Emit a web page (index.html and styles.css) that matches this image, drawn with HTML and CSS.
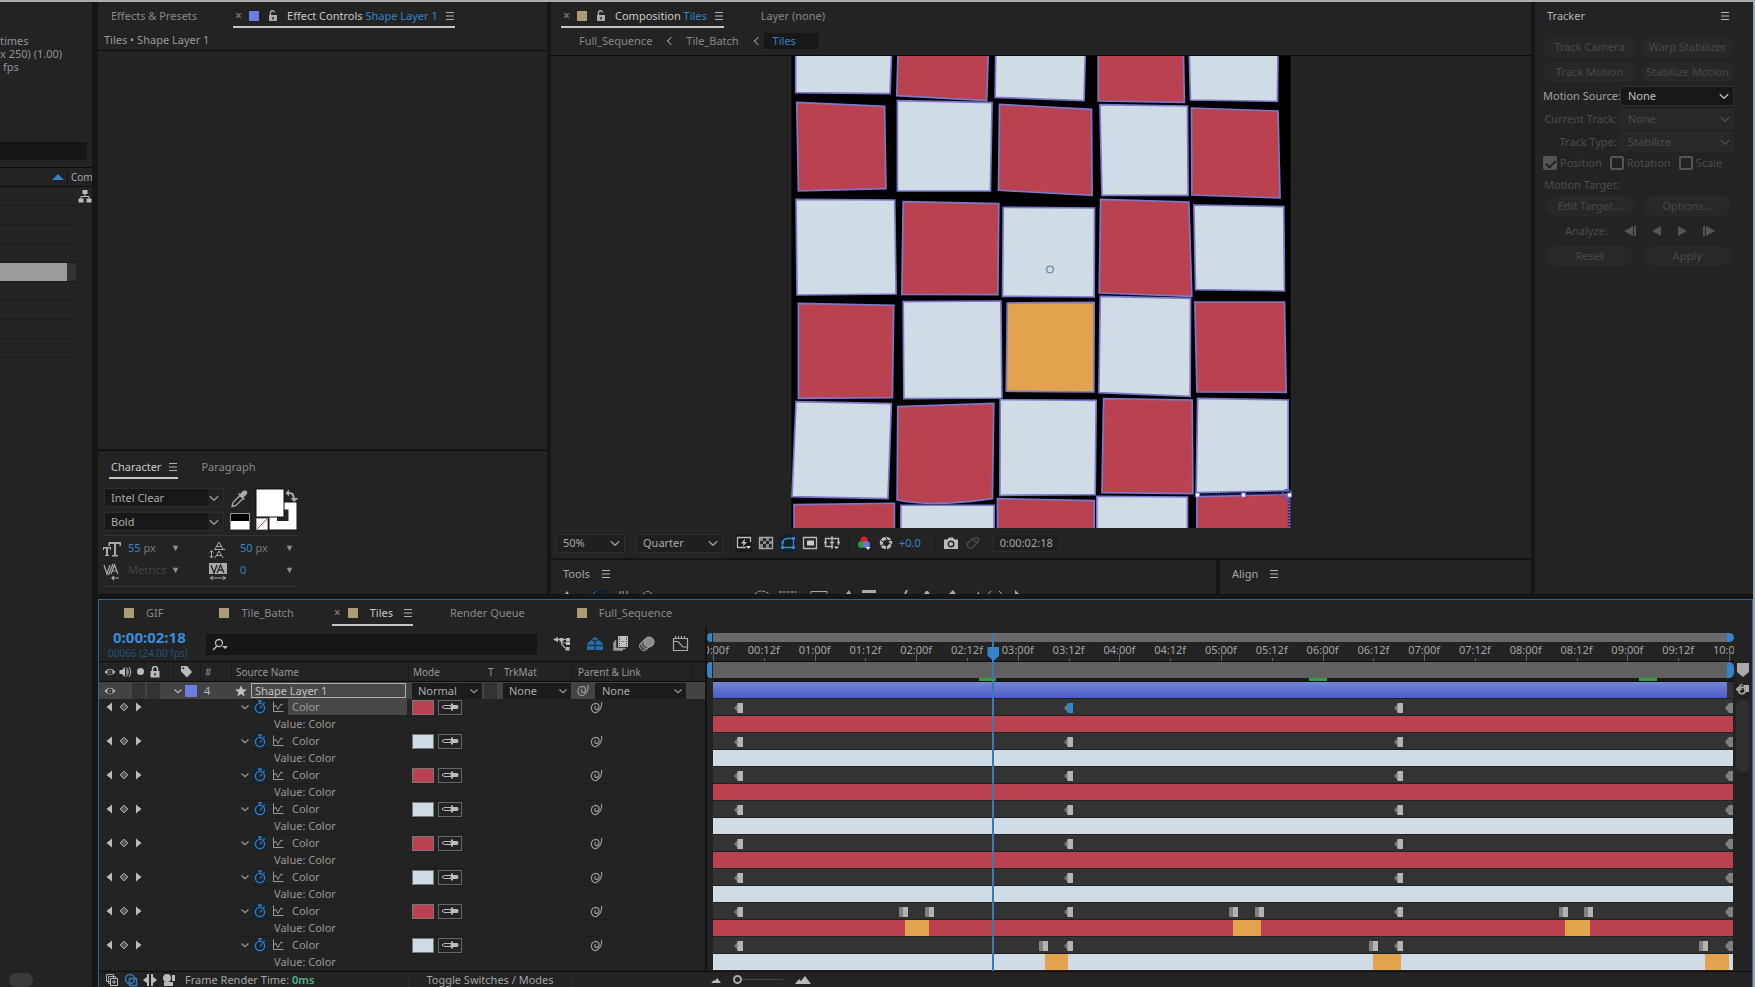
FILE: index.html
```html
<!DOCTYPE html>
<html lang="en">
<head>
<meta charset="utf-8">
<title>Tiles - Motion Editor</title>
<link rel="stylesheet" href="styles.css">
</head>
<body>
<svg class="defs" aria-hidden="true">
  <symbol id="i-menu" viewBox="0 0 10 10"><path d="M1 1.500h8M1 5h8M1 8.500h8" stroke="currentColor" stroke-width="1.200"/></symbol>
  <symbol id="i-lock-open" viewBox="0 0 10 12"><path d="M1 5h8v6H1z" fill="currentColor"/><path d="M2.500 5V3a2 2 0 0 1 4-.6" fill="none" stroke="currentColor" stroke-width="1.400"/><path d="M5 7v2.500" stroke="#232323" stroke-width="1.400"/></symbol>
  <symbol id="i-lock" viewBox="0 0 10 12"><path d="M.5 5h9v6.500h-9z" fill="currentColor"/><path d="M2.500 5V3a2.500 2.500 0 0 1 5 0v2" fill="none" stroke="currentColor" stroke-width="1.500"/><path d="M5 7v2.500" stroke="#232323" stroke-width="1.400"/></symbol>
  <symbol id="i-eye" viewBox="0 0 12 10"><path d="M.5 5Q6-1.500 11.500 5Q6 11.500 .5 5z" fill="currentColor"/><circle cx="6" cy="5" r="2.600" fill="#2c2c2c"/><circle cx="6" cy="5" r="1" fill="#777"/></symbol>
  <symbol id="i-speaker" viewBox="0 0 13 12"><path d="M.5 4H3l3-3v10L3 8H.5z" fill="currentColor"/><path d="M7.500 1.500q3.500 4.500 0 9M7.500 4q1.500 2 0 4M10 1q3.500 5 0 10" fill="none" stroke="currentColor"/></symbol>
  <symbol id="i-tag" viewBox="0 0 13 13"><path d="M1 1h6l5 6-5 5.500-6-6z" fill="currentColor"/><circle cx="3.300" cy="3.300" r="1" fill="#232323"/></symbol>
  <symbol id="i-chev" viewBox="0 0 10 10"><path d="M1.500 3.500L5 6.800l3.500-3.300" fill="none" stroke="currentColor" stroke-width="1.200"/></symbol>
  <symbol id="i-prev" viewBox="0 0 8 10"><path d="M7 .5v9L1.500 5z" fill="currentColor"/></symbol>
  <symbol id="i-next" viewBox="0 0 8 10"><path d="M1 .5v9L6.500 5z" fill="currentColor"/></symbol>
  <symbol id="i-diamond" viewBox="0 0 10 10"><path d="M5 1.200L8.800 5 5 8.800 1.200 5z" fill="#555" stroke="currentColor"/></symbol>
  <symbol id="i-watch" viewBox="0 0 12 14"><circle cx="6" cy="8" r="4.600" fill="none" stroke="currentColor" stroke-width="1.400"/><path d="M6 3.500V1M4 1h4M9.500 3.500l1.200-1.200M6 8.500l2-3" stroke="currentColor" stroke-width="1.300"/></symbol>
  <symbol id="i-graph" viewBox="0 0 12 12"><path d="M1.500 .5v10H11.500M1.500 6.500l2-2.500 2.500 4.500 3-5.500 2 1" fill="none" stroke="currentColor"/></symbol>
  <symbol id="i-spiral" viewBox="0 0 13 13"><path d="M11.500 1A9.500 9.500 0 0 1 6 11.700A4.700 4.700 0 0 1 1.300 7A4.700 4.700 0 0 1 6 2.300A3.300 3.300 0 0 1 9 5.700A2.800 2.800 0 0 1 6.200 8.600A1.900 1.900 0 0 1 5.600 5.200" fill="none" stroke="currentColor" stroke-width="1.200"/></symbol>
  <symbol id="i-pick" viewBox="0 0 20 10"><path d="M2 5q1-1.500 3-1.500h6v3H5Q3 6.500 2 5z" fill="none" stroke="currentColor"/><path d="M11 1.500h2V3h4q1.500 0 1.500 2T17 7h-4v1.500h-2z" fill="currentColor"/></symbol>
  <symbol id="i-star" viewBox="0 0 12 12"><path d="M6 .3l1.700 3.900 4.200.3-3.300 2.700 1.100 4.200L6 9.100l-3.700 2.300 1.100-4.200L.1 4.500l4.200-.3z" fill="currentColor"/></symbol>
  <symbol id="i-key" viewBox="0 0 10 10"><path d="M4.500 0v10L0 5z" fill="#777"/><path d="M3.500 0H9v10H3.500z" fill="currentColor"/></symbol>
  <symbol id="i-hold" viewBox="0 0 10 10"><path d="M0 0h4v10H0z" fill="#808080"/><path d="M4 0h5v10H4z" fill="currentColor"/></symbol>
  <symbol id="i-end" viewBox="0 0 10 10"><path d="M1 5l4-5h4v10H5z" fill="#808080"/></symbol>
</svg>
<div class="app">
  <aside class="project">
    <div class="info"><span>times</span><span>x 250) (1.00)</span><span class="fps">fps</span></div>
    <input class="find" type="text" aria-label="Search project">
    <div class="cols"><svg width="12" height="6"><path d="M0 6L6 0l6 6z" fill="#2f84d0"/></svg><span>Com</span></div>
    <div class="list">
      <svg class="tree" width="14" height="13" viewBox="0 0 14 13"><path d="M4.500 0h5v4h-5zM.5 8.500h5v4h-5zM8.500 8.500h5v4h-5z" fill="#bbb"/><path d="M7 4v2.500M3 9V6.500h8V9" fill="none" stroke="#bbb"/></svg>
      <i></i><i></i><i></i><i></i><i class="on"></i><i></i><i></i><i></i><i></i>
    </div>
    <div class="thumb"></div>
  </aside>

  <div class="main">
    <div class="upper">
      <div class="left">
        <section class="panel effects">
          <div class="tabs">
            <span class="tab">Effects &amp; Presets</span>
            <span class="tab on wide"><b class="x">×</b><i class="sq blue"></i><svg class="lk" width="10" height="12"><use href="#i-lock-open"/></svg><span>Effect Controls <em>Shape Layer 1</em></span><svg class="mn" width="10" height="10"><use href="#i-menu"/></svg></span>
          </div>
          <div class="path">Tiles • Shape Layer 1</div>
        </section>
        <section class="panel character">
          <div class="tabs">
            <span class="tab on"><span>Character</span><svg class="mn" width="10" height="10"><use href="#i-menu"/></svg></span>
            <span class="tab">Paragraph</span>
          </div>
          <div class="char">
            <div class="fonts">
              <span class="sel"><select aria-label="Font family"><option>Intel Clear</option></select><svg width="12" height="12"><use href="#i-chev"/></svg></span>
              <span class="sel"><select aria-label="Font style"><option>Bold</option></select><svg width="12" height="12"><use href="#i-chev"/></svg></span>
            </div>
            <svg class="swatches" width="72" height="44" viewBox="0 0 72 44">
              <path d="M5 18.500l1-4 7-7 3 3-7 7z" fill="none" stroke="#aaa" stroke-width="1.300"/><path d="M11 6l6 6 1-1-1.500-1.500L20 6q1-3-1.500-3.500T15 4l-2 2-1-1z" fill="#aaa"/>
              <path d="M3.500 25.500h19v16h-19z" fill="#fff" stroke="#999"/><path d="M4 26h18v7H4z"/>
              <path d="M42 14h28v28H42z" fill="#fff" stroke="#111"/><path d="M50 21.500h11.500V33H50z" fill="#222"/>
              <path d="M29 1h28v28H29z" fill="#fff" stroke="#111"/>
              <path d="M29.500 30.500h11v11h-11z" fill="#fff" stroke="#aaa"/><path d="M30 41l10-10" stroke="#a55"/>
              <path d="M61 5q6-1 6 7" fill="none" stroke="#aaa" stroke-width="2"/><path d="M62 1.500v7L58.500 5zM63.500 10h8L67 14z" fill="#aaa"/>
            </svg>
          </div>
          <div class="metrics">
            <svg width="18" height="16"><path d="M0 6h8v3H7V7.500H5V14h1v1H2v-1h1V7.500H1V9H0zM5.500 1H18v4h-1.500V3H13v11h2v1.500H9V14h2V3H7v2H5.500z" fill="#aaa"/></svg><span><em>55</em> px</span><b>▼</b>
            <svg width="18" height="18"><path d="M6 8l4-7 4 7M8 5.500h4M6 17l4-7 4 7M8 14.500h4M5 8.500h11M2.500 10v6M.8 11.500L2.500 9.500l1.700 2M.8 15l1.700 2 1.700-2" fill="none" stroke="#aaa"/></svg><span><em>50</em> px</span><b>▼</b>
            <svg width="18" height="18"><path d="M1 2l3 9 3-9M5.500 12L10 1M8 11l3.500-9L15 11M9.500 8h4M9 15h7M11 13l-2 2 2 2" fill="none" stroke="#aaa" stroke-width="1.200"/></svg><span class="off">Metrics</span><b>▼</b>
            <svg width="18" height="18"><path d="M0 0h18v11H0z" fill="#aaa"/><path d="M2 2l3 8 3-8M8 10l3.500-8L15 10M10 7h4" fill="none" stroke="#222" stroke-width="1.300"/><path d="M1 15h16M4 13l-2.500 2L4 17M14 13l2.500 2-2.500 2" fill="none" stroke="#aaa"/></svg><span><em>0</em></span><b>▼</b>
          </div>
        </section>
      </div>

      <div class="center">
        <section class="panel comp">
          <div class="tabs">
            <span class="tab on"><b class="x">×</b><i class="sq tan"></i><svg class="lk" width="10" height="12"><use href="#i-lock-open"/></svg><span>Composition <em>Tiles</em></span><svg class="mn" width="10" height="10"><use href="#i-menu"/></svg></span>
            <span class="tab">Layer (none)</span>
          </div>
          <nav class="crumbs"><a href="#">Full_Sequence</a><i></i><a href="#">Tile_Batch</a><i></i><a href="#" class="cur">Tiles</a></nav>
          <div class="stage">
            <svg viewBox="11 16 499 472">
              <path d="M11 15h499v473H11z"/>
              <g transform="scale(.338 .3333)" stroke="#7d78c8" stroke-width="5">
                <g fill="#cfdce5">
                  <path d="M45 30H329L324 161 45 158zM637 30H902L898 182 635 172zM1209 30H1472L1470 184 1213 180zM346 182L626 188 621 453 346 453zM945 194L1204 198 1206 466 951 466zM46 478L338 480 342 762 49 765zM659 502L929 504 928 771 657 769zM1223 495L1489 500 1491 753 1228 749zM363 785L652 783 655 1074 365 1076zM946 769L1213 775 1212 1069 942 1058zM46 1085L328 1091 318 1376 34 1370zM650 1079L934 1081 931 1364 649 1366zM1234 1075L1502 1080 1502 1352 1230 1358zM356 1396H632V1490H356zM936 1369L1204 1371V1490H936z"/>
                </g>
                <g fill="#b94150">
                  <path d="M348 30H615L610 182 344 167zM940 30H1192L1195 187 940 183zM48 187L308 199 312 446 53 453zM648 193L920 208 922 466 645 451zM1216 204L1472 213 1478 474 1217 465zM363 485L646 491 643 764 359 763zM947 478L1208 486 1217 769 943 759zM53 790L335 796 331 1073 53 1075zM1226 786L1491 786 1496 1057 1232 1056zM347 1100L631 1090 627 1376Q450 1402 345 1380zM956 1076L1218 1080 1220 1361 951 1358zM40 1394L337 1390V1490H40zM642 1376L928 1382V1490H642zM1232 1370L1506 1363V1490H1232z"/>
                </g>
                <path d="M671 789L928 787 927 1056 668 1054z" fill="#e3a24e"/>
              </g>
              <circle cx="269.500" cy="229.500" r="3.300" fill="#dce2ea" stroke="#7b8fb8" stroke-width="1.500"/>
              <path d="M417 454.500l86-1M508.500 458v30" stroke="#222a77" stroke-width="2.500" stroke-dasharray="1.500 1.500"/>
              <circle cx="506.500" cy="454" r="4.500" fill="none" stroke="#5560b5" stroke-width="1.500"/>
              <path d="M415 453h4v4h-4zM461 453h4v4h-4zM507 453h4v4h-4z" fill="#fff" stroke="#7d78c8"/>
            </svg>
          </div>
          <div class="viewbar">
            <span class="sel z"><select aria-label="Zoom"><option>50%</option></select><svg width="12" height="12"><use href="#i-chev"/></svg></span>
            <span class="sel q"><select aria-label="Resolution"><option>Quarter</option></select><svg width="12" height="12"><use href="#i-chev"/></svg></span>
            <div class="vicons">
              <button aria-label="Fast previews" class="dk"><svg width="16" height="14"><path d="M14.500 6V1.500h-13v10H10" fill="none" stroke="#bbb" stroke-width="1.300"/><path d="M9 2.500L5 7.500h2.500L6.500 11 11 6H8.500z" fill="#bbb"/><path d="M10 10h5l-2.500 3z" fill="#ddd"/></svg></button>
              <button aria-label="Transparency grid"><svg width="16" height="14"><path d="M1.500 1.500h13v11h-13z" fill="none" stroke="#aaa" stroke-width="1.300"/><path d="M2 2h3v3H2zM8 2h3v3H8zM5 5h3v3H5zM11 5h3v3h-3zM2 8h3v4H2zM8 8h3v4H8z" fill="#888"/></svg></button>
              <button aria-label="Mask visibility" class="act"><svg width="16" height="14"><path d="M2.500 11.500V7Q3 3 7 2.500h6.500v9z" fill="none" stroke="#3a86c8" stroke-width="1.300"/><path d="M1 10h3v3H1zM12 10h3v3h-3zM12 1h3v3h-3zM1 5.500h3v2H1z" fill="#3a86c8"/></svg></button>
              <button aria-label="Region of interest"><svg width="16" height="14"><path d="M1.500 1.500h13v11h-13z" fill="none" stroke="#bbb" stroke-width="1.300"/><path d="M5 4.500h7v5H5z" fill="#ccc"/></svg></button>
              <button aria-label="Guides"><svg width="16" height="14"><path d="M9 10.500H1.500v-8h13V9M8 0v13M0 6.500h3M13 6.500h3M6 6.500h4" fill="none" stroke="#bbb" stroke-width="1.300"/><path d="M10 10.500h5L12.500 13z" fill="#ddd"/></svg></button>
            </div>
            <div class="vicons exp">
              <button aria-label="Channels"><svg width="16" height="14"><circle cx="7" cy="4" r="3.500" fill="#d22"/><circle cx="4.500" cy="8.500" r="3.500" fill="#2a9a3c"/><circle cx="9.500" cy="8.500" r="3.500" fill="#6a78dd"/><path d="M8.500 11h5L11 14z" fill="#ddd"/></svg></button>
              <button aria-label="Reset exposure"><svg width="14" height="14"><circle cx="7" cy="7" r="4.600" fill="none" stroke="#bbb" stroke-width="3.200"/><path d="M6 0l3 5M13 4l-5 1M13.500 9.500L9 6M7 14l1-6M1 10l5-2M1 3l4 4" stroke="#232323"/></svg></button>
              <em>+0.0</em>
            </div>
            <div class="vicons cam">
              <button aria-label="Snapshot"><svg width="16" height="14"><path d="M1 3.500h3.500L6 1.500h4l1.500 2H15v9.500H1z" fill="#bbb"/><circle cx="8" cy="8" r="2.800" fill="#bbb" stroke="#232323" stroke-width="1.400"/></svg></button>
              <button aria-label="Show snapshot"><svg width="16" height="14"><path d="M2 8l5-5 5 4-5 5q-4 1-5-4zM8 3q5-3 6 1l-3 4" fill="none" stroke="#4a4a4a" stroke-width="1.400"/></svg></button>
            </div>
            <span class="tc">0:00:02:18</span>
          </div>
        </section>
        <div class="strip">
          <section class="panel tools">
            <div class="tabs"><span class="tab"><span>Tools</span><svg class="mn" width="10" height="10"><use href="#i-menu"/></svg></span></div>
            <svg class="cut" width="560" height="4"><path d="M38 0h20v4H38z" fill="#15202c"/><path d="M14 4l2-3 2 3zM295 4l3-4 2 4zM311 0h14v3h-14zM353 4l2-4h2l-2 4zM373 4l2-3h2l2 3zM398 4l4-4 3 4zM426 4l2-3v3zM441 1v3M464 4v-4l4 4z" fill="#aaa"/><path d="M42 4l3-3" stroke="#3a86c8"/><path d="M69 4V1m3 3V0m4 4V1M92 4q5-5 9 0M204 4q6-6 14 0M228 2h18" fill="none" stroke="#aaa" stroke-dasharray="3 1"/><path d="M260 3.500v-2h16v2M437 4l3-3M451 4l-3-3" fill="none" stroke="#aaa"/></svg>
          </section>
          <section class="panel align"><div class="tabs"><span class="tab"><span>Align</span><svg class="mn" width="10" height="10"><use href="#i-menu"/></svg></span></div></section>
        </div>
      </div>

      <section class="panel tracker">
        <header><span>Tracker</span><svg width="10" height="10"><use href="#i-menu"/></svg></header>
        <div class="pair"><button disabled>Track Camera</button><button disabled>Warp Stabilizer</button><button disabled>Track Motion</button><button disabled>Stabilize Motion</button></div>
        <div class="fields">
          <label class="lit" for="ms">Motion Source:</label><span class="sel lit"><select id="ms"><option>None</option></select><svg width="12" height="12"><use href="#i-chev"/></svg></span>
          <label for="ct">Current Track:</label><span class="sel"><select id="ct" disabled><option>None</option></select><svg width="12" height="12"><use href="#i-chev"/></svg></span>
          <label for="tt">Track Type:</label><span class="sel"><select id="tt" disabled><option>Stabilize</option></select><svg width="12" height="12"><use href="#i-chev"/></svg></span>
        </div>
        <div class="checks"><label><input type="checkbox" checked disabled>Position</label><label><input type="checkbox" disabled>Rotation</label><label><input type="checkbox" disabled>Scale</label></div>
        <div class="target">Motion Target:</div>
        <div class="pair in"><button disabled>Edit Target...</button><button disabled>Options...</button></div>
        <div class="analyze"><span>Analyze:</span>
          <svg width="92" height="10"><path d="M9 0v10L0 5zM10 0h2v10h-2zM37 0v10l-9-5zM54 0v10l9-5zM79 0h2v10h-2zM82 0v10l9-5z" fill="#555"/></svg></div>
        <div class="pair in"><button disabled>Reset</button><button disabled>Apply</button></div>
      </section>
    </div>

    <section class="timeline">
      <div class="tabs">
        <span class="tab"><i class="sq tan"></i>GIF</span>
        <span class="tab"><i class="sq tan"></i>Tile_Batch</span>
        <span class="tab on"><b class="x">×</b><i class="sq tan"></i><span>Tiles</span><svg class="mn" width="10" height="10"><use href="#i-menu"/></svg></span>
        <span class="tab rq">Render Queue</span>
        <span class="tab"><i class="sq tan"></i>Full_Sequence</span>
      </div>
      <div class="body">
        <div class="outline">
          <div class="ctl">
            <div class="clock"><strong>0:00:02:18</strong><small>00066 (24.00 fps)</small></div>
            <div class="search"><svg width="18" height="13"><circle cx="8" cy="5" r="3.500" fill="none" stroke="#bbb" stroke-width="1.300"/><path d="M6 8L2 12" stroke="#bbb" stroke-width="1.500"/><path d="M11 8h6l-3 3z" fill="#bbb"/></svg><input type="text" aria-label="Search layers"></div>
            <div class="modes">
              <svg width="18" height="16"><path d="M3 3.500h11M8.500 3.500V8L12 12M8.500 7h5" fill="none" stroke="#aaa" stroke-width="1.200"/><path d="M0 3.500L5 1v5zM6.500 2h4v3.500h-4zM13 2h4v3.500h-4zM13 6h4v3h-4zM12.500 11h4v3.500h-4z" fill="#bbb"/></svg>
              <svg width="18" height="16"><path d="M1 8q2-3 4-3.500Q7 1 9 1t4 3.500q2 .5 4 3.500v6H1z" fill="#2a6cab"/><path d="M9 4v10M6 4.500h6M1 9.500h16" stroke="#173450" stroke-width="1.400"/></svg>
              <svg width="18" height="16"><path d="M2 6v8h9M3.500 4v8.500h10" fill="none" stroke="#999" stroke-width="1.500"/><path d="M6 0h10v11H6z" fill="#c0c0c0"/><path d="M7.500 1v9M14.500 1v9" stroke="#444" stroke-dasharray="1 1"/><path d="M9.500 5.500h3" stroke="#888"/></svg>
              <svg width="18" height="16"><circle cx="6" cy="10" r="4.500" fill="#444" stroke="#999"/><circle cx="8" cy="8" r="4.500" fill="#555" stroke="#999"/><circle cx="11" cy="6" r="5" fill="#8c8c8c" stroke="#aaa"/></svg>
              <svg width="18" height="16"><path d="M1.500 2.500h14v12h-14z" fill="none" stroke="#aaa" stroke-width="1.200"/><path d="M3.500 0v3M6.500 0v3M9.500 0v3M12.500 0v3M1.500 5.500H6L11 11h4.500" fill="none" stroke="#aaa" stroke-width="1.200"/></svg>
            </div>
          </div>
          <div class="row head">
            <span class="av"><svg width="12" height="10"><use href="#i-eye"/></svg><svg width="13" height="12"><use href="#i-speaker"/></svg><i class="dot"></i><svg width="10" height="12"><use href="#i-lock"/></svg></span>
            <span class="ln tg"><svg width="13" height="13"><use href="#i-tag"/></svg></span>
            <span class="ln num">#</span><span class="ln sn">Source Name</span><span class="ln md">Mode</span><span class="t">T</span><span class="tm">TrkMat</span><span class="ln pl">Parent &amp; Link</span><span class="ln"></span>
          </div>
          <div class="row layer">
            <span class="av"><svg width="12" height="10"><use href="#i-eye"/></svg><i class="bx"></i><i class="bx"></i></span>
            <span class="lab"><svg width="10" height="10"><use href="#i-chev"/></svg><i class="sq blue"></i></span>
            <span class="num">4</span>
            <span class="nm"><svg width="12" height="12"><use href="#i-star"/></svg><input type="text" value="Shape Layer 1" aria-label="Layer name"></span>
            <span class="sel"><select aria-label="Mode"><option>Normal</option></select><svg width="10" height="10"><use href="#i-chev"/></svg></span>
            <span class="tb"><i class="bx"></i></span>
            <span class="sel"><select aria-label="Track matte"><option>None</option></select><svg width="10" height="10"><use href="#i-chev"/></svg></span>
            <span class="par"><svg class="sp" width="13" height="13"><use href="#i-spiral"/></svg><span class="sel"><select aria-label="Parent"><option>None</option></select><svg width="10" height="10"><use href="#i-chev"/></svg></span></span>
            <span></span>
          </div>
          <div id="props"></div>
        </div>
        <div class="tracks">
          <div class="nav"></div>
          <div class="ruler" id="ruler"></div>
          <div class="work"></div>
          <div class="cache" id="cache"></div>
          <div class="lane first"><div class="clip"></div></div>
          <div id="lanes"></div>
          <div class="playhead"><i></i></div>
        </div>
        <div class="gutter">
          <svg width="14" height="16"><path d="M1 1h12v9l-6 5-6-5z" fill="#aaa"/></svg>
          <svg width="14" height="14"><path d="M0 8l6-6M1 8.500l5-1.500" stroke="#aaa" stroke-width="1.500"/><circle cx="6" cy="8.500" r="3.200" fill="none" stroke="#aaa" stroke-width="1.500"/><path d="M7 3h6v7h-3z" fill="#aaa"/></svg>
          <i></i>
        </div>
      </div>
      <footer>
        <div class="fi">
          <svg width="14" height="14"><path d="M1.500 1.500h7v7h-7zM3.500 3.500h7v7h-7z" fill="#232323" stroke="#aaa"/><path d="M5.500 5.500h7v7h-7z" fill="#232323" stroke="#bbb"/><path d="M9 7v4M7 9h4" stroke="#bbb"/></svg>
          <svg width="14" height="14"><circle cx="6" cy="6" r="4.500" fill="none" stroke="#2f7cc4" stroke-width="1.500"/><path d="M5.500 5.500h7v7h-7z" fill="none" stroke="#2f7cc4" stroke-width="1.500"/></svg>
          <svg width="14" height="14"><path d="M5 1v12M9 1v12" stroke="#bbb" stroke-width="2"/><path d="M5 3L0 7l5 4zM9 3l5 4-5 4z" fill="#bbb"/></svg>
          <svg width="14" height="14"><circle cx="5" cy="5" r="4" fill="#bbb"/><path d="M2 9h9v4H2zM10 2h3v6h-3z" fill="#bbb"/></svg>
        </div>
        <span class="frt">Frame Render Time: <b>0ms</b></span>
        <button class="tsm">Toggle Switches / Modes</button>
        <label class="zoom"><svg width="10" height="6"><path d="M0 6l3-3 1 1 2-3 4 5z" fill="#bbb"/></svg><input type="range" min="0" max="100" value="0" aria-label="Timeline zoom"><svg width="16" height="8"><path d="M0 8l4-5 2 2 4-5 6 8z" fill="#bbb"/></svg></label>
      </footer>
    </section>
  </div>
</div>
<script src="app.js"></script>
</body>
</html>
```
FILE: styles.css
```css
* { box-sizing: border-box; }
body { margin: 0; background: #161616; color: #a5a5a5; font: 11px/14px "Noto Sans", "Open Sans", sans-serif; overflow: hidden; }
.defs { position: absolute; width: 0; height: 0; }
svg { display: block; flex: none; }
i, em { font-style: normal; }
em { color: #3583c9; }
input, select, button { font: inherit; color: inherit; margin: 0; padding: 0; border: 0; background: none; appearance: none; border-radius: 0; min-width: 0; opacity: 1; }
input:focus, select:focus { outline: none; }
.app { display: flex; height: 100vh; border-top: 2px solid #a9b0aa; border-right: 2px solid #9aa5ae; }
.panel { background: #232323; }

.project { width: 92px; flex: none; background: #232323; display: flex; flex-direction: column; overflow: hidden; }
.info { display: flex; flex-direction: column; padding-top: 32px; line-height: 13px; white-space: nowrap; color: #929292; height: 140px; }
.info .fps { padding-left: 3px; }
.find { width: 87px; height: 18px; background: #161616; }
.cols { margin-top: 7px; height: 20px; border-top: 1px solid #0c0c0c; border-bottom: 1px solid #0c0c0c; display: flex; align-items: center; padding-left: 52px; gap: 3px; font-size: 10px; }
.cols span { border-left: 1px solid #151515; padding-left: 3px; }
.list { position: relative; flex: 1; }
.list i { display: block; width: 76px; height: 19px; border-bottom: 1px solid #1c1c1c; }
.list i.on { background: linear-gradient(90deg, #9b9b9b 67px, #333 67px); }
.tree { position: absolute; right: 0; top: 3px; }
.thumb { width: 24px; height: 14px; border-radius: 7px; background: #3a3a3a; margin-left: 9px; }

.main { flex: 1; min-width: 0; margin-left: 6px; display: flex; flex-direction: column; }
.upper { flex: 1; min-height: 0; display: flex; gap: 4px; margin-bottom: 5px; }
.left { width: 449px; flex: none; display: flex; flex-direction: column; gap: 3px; }
.center { flex: 1; min-width: 0; display: flex; flex-direction: column; gap: 2px; }
.tracker { width: 218px; flex: none; }

.tabs { display: flex; height: 26px; align-items: stretch; white-space: nowrap; }
.tab { display: flex; align-items: center; color: #888; padding-top: 3px; border-bottom: 2px solid transparent; }
.tab.on { color: #c8c8c8; border-bottom-color: #c4c4c4; padding-left: 2px; }
.x { font-weight: 400; font-size: 12px; color: #888; width: 14px; }
.sq { width: 10px; height: 10px; flex: none; }
.sq.blue { background: #6c7ce0; }
.sq.tan { background: #ab9b78; }
.lk { margin: 0 9px; color: #aaa; }
.mn { margin-left: 7px; color: #b0b0b0; }

.effects { flex: 1; }
.effects .tabs { padding-left: 13px; gap: 36px; }
.path { padding: 5px 6px 2px; height: 23px; border-bottom: 1px solid #0e0e0e; color: #999; }
.character { height: 142px; border-top: 1px solid #2b2b2b; }
.character .tabs { padding-left: 11px; gap: 23px; }
.sel { display: flex; align-items: center; position: relative; min-width: 0; color: #aaa; }
.sel select { width: 100%; height: 100%; }
.sel > svg { position: absolute; right: 3px; color: #999; pointer-events: none; }
.char { display: flex; padding: 9px 0 0 6px; gap: 3px; width: 201px; height: 56px; }
.fonts { width: 122px; display: flex; flex-direction: column; gap: 5px; }
.fonts .sel { height: 19px; background: linear-gradient(90deg, #181818 103px, #222 103px); border: 1px solid #2c2c2c; padding-left: 6px; }
.metrics { width: 195px; margin-left: 5px; padding-top: 5px; border-top: 1px solid #333; border-bottom: 1px solid #333; height: 52px; display: grid; grid-template-columns: 25px 43px 38px 31px 45px 13px; grid-auto-rows: 21px; row-gap: 1px; color: #777; }
.metrics b { font-weight: 400; font-size: 9px; color: #909090; }
.metrics .off { color: #444; }

.comp { flex: 1; min-height: 0; display: flex; flex-direction: column; }
.comp .tabs { padding-left: 10px; gap: 37px; }
.crumbs { display: flex; align-items: center; height: 28px; padding: 0 0 2px 28px; border-bottom: 1px solid #0c0c0c; }
.crumbs a { color: #888; text-decoration: none; }
.crumbs i { width: 6px; height: 6px; border-left: 1px solid #999; border-bottom: 1px solid #999; transform: rotate(45deg); margin: 0 12px 0 16px; }
.crumbs .cur { background: #181818; color: #3583c9; padding: 1px 23px 1px 9px; margin-left: -9px; }
.stage { flex: 1; min-height: 0; }
.stage svg { width: 100%; height: 100%; }
.viewbar { height: 30px; display: flex; align-items: center; padding-left: 5px; }
.viewbar .sel { height: 19px; border: 1px solid #2e2e2e; padding-left: 6px; background: #1f1f1f; }
.z { width: 69px; margin-right: 11px; }
.q { width: 87px; margin-right: 7px; }
.vicons { display: flex; align-items: center; gap: 6px; border-left: 1px solid #1b1b1b; padding-left: 5px; }
.vicons button { height: 18px; }
.vicons .dk { background: #181818; }
.vicons .act { background: #14202c; }
.exp { margin-left: 8px; padding-left: 8px; }
.cam { margin-left: 14px; padding-left: 7px; }
.tc { margin-left: 12px; border: 1px solid #2b2b2b; padding: 1px 6px; background: #1f1f1f; }
.strip { display: flex; gap: 4px; height: 34px; flex: none; }
.tools { flex: 2 1 0; }
.align { flex: 0 1 311px; }
.strip .tab { color: #a5a5a5; padding-left: 12px; }
.strip .mn { margin-left: 11px; }
.tools .cut { margin-top: 4px; }

.tracker { padding: 0 19px 0 8px; color: #4c4c4c; }
.tracker header { display: flex; justify-content: space-between; align-items: center; height: 28px; padding: 0 4px 0 4px; color: #b5b5b5; margin-bottom: 7px; }
.pair { display: grid; grid-template-columns: 1fr 1fr; gap: 5px; }
.pair button { height: 20px; border-radius: 10px; background: #282828; color: #484848; white-space: nowrap; }
.pair.in { padding: 0 3px; gap: 10px; }
.fields { display: grid; grid-template-columns: 74px 1fr; gap: 3px; margin-top: 4px; align-items: center; white-space: nowrap; text-align: right; }
.fields .sel { height: 20px; background: #282828; padding-left: 8px; color: #4c4c4c; }
.fields .sel svg { color: #4c4c4c; }
.fields .lit { color: #a0a0a0; }
.fields .sel.lit { background: #171717; border: 1px solid #303030; color: #c0c0c0; padding-left: 7px; }
.fields .sel.lit svg { color: #bbb; }
.checks { display: flex; gap: 8px; height: 22px; align-items: center; }
.checks label { display: flex; align-items: center; gap: 3px; }
.checks input { width: 14px; height: 14px; border: 2px solid #555; border-radius: 2px; }
.checks input:checked { background: #555; }
.checks input:checked::after { content: ""; display: block; width: 4px; height: 8px; margin-left: 3px; border: solid #232323; border-width: 0 2px 2px 0; transform: rotate(45deg); }
.target { height: 22px; padding: 4px 1px; }
.analyze { display: flex; align-items: center; height: 30px; padding-left: 22px; gap: 16px; }

.timeline { height: 388px; flex: none; background: #232323; border: 1px solid #2c6698; border-bottom: 0; display: flex; flex-direction: column; }
.timeline .tabs { height: 26px; padding-left: 25px; gap: 41px; }
.timeline .tab { padding-top: 2px; }
.timeline .tab .sq { margin-right: 12px; }
.timeline .tab:first-child { margin-right: 15px; }
.timeline .tab.on .mn { margin-left: 10px; }
.timeline .rq { margin-right: 11px; }
.timeline .tab.on { margin: 0 -4px 0 -3px; }
.body { flex: 1; min-height: 0; display: flex; }
.outline { width: 608px; flex: none; border-right: 2px solid #121212; overflow: hidden; }
.ctl { height: 36px; display: flex; border-bottom: 1px solid #0e0e0e; }
.clock { width: 107px; padding: 3px 0 0 9px; display: flex; flex-direction: column; white-space: nowrap; }
.clock strong { font-size: 15px; line-height: 17px; color: #3a8cdc; padding-left: 5px; }
.clock small { font-size: 10px; line-height: 14px; color: #22527e; }
.search { width: 331px; height: 21px; margin-top: 8px; background: #161616; display: flex; align-items: center; padding-left: 5px; }
.search input { flex: 1; }
.modes { display: flex; padding: 10px 0 0 16px; gap: 8px; align-items: flex-start; }
.modes svg:first-child { margin-right: 7px; }
.modes svg:last-child { margin-left: 8px; }
.row { display: grid; grid-template-columns: 74px 27px 31px 177px 74px 19px 70px 120px 1fr; height: 17px; align-items: center; white-space: nowrap; border-bottom: 1px solid #1e1e1e; color: #999; }
.row > span { display: flex; align-items: center; height: 16px; min-width: 0; }
.head { height: 20px; border-bottom: 1px solid #0c0c0c; font-size: 10px; }
.head .ln { border-left: 1px solid #1a1a1a; }
.av { padding-left: 5px; gap: 3px; color: #bbb; }
.dot { width: 7px; height: 7px; border-radius: 50%; background: #bbb; margin: 0 3px 0 2px; }
.tg { padding-left: 6px; color: #bbb; }
.num { padding-left: 4px; }
.sn, .md { padding-left: 4px; }
.t { padding-left: 6px; }
.tm { padding-left: 3px; }
.pl { padding-left: 6px; }
.layer { background: #434343; border: 0; color: #b5b5b5; }
.layer > span { height: 17px; }
.layer .av { gap: 2px; }
.layer .av .bx:first-of-type { margin-left: 14px; }
.bx { width: 13px; height: 16px; background: #333; }
.lab { gap: 2px; }
.lab .sq { width: 12px; height: 12px; }
.nm { padding-left: 4px; gap: 4px; color: #c0c0c0; }
.nm input { flex: 1; height: 15px; border: 1px solid #b0b0b0; background: #484848; padding-left: 3px; margin-right: 2px; }
.layer .sel { background: #1c1c1c; height: 16px; padding-left: 7px; }
.layer > .sel { margin-left: 4px; padding-left: 6px; }
.layer > .sel:nth-child(7) { margin-left: 2px; }
.tb { padding-left: 2px; }
.par .sp { width: 24px; color: #999; }
.par .sel { flex: 1; margin-right: 5px; }
.prop .av { gap: 6px; padding-left: 6px; }
.prop .cn { grid-column: 4 / 5; padding-left: 9px; gap: 4px; }
.cn .w { color: #2f7cc4; background: #172430; }
.cn b { font-weight: 400; flex: 1; height: 16px; padding-left: 4px; line-height: 16px; margin-right: 1px; }
.cn svg:nth-child(3) { margin-left: 2px; }
.cn.hot b { background: #474747; }
.pick { gap: 4px; padding-left: 4px; }
.pick i { width: 22px; height: 15px; border: 1px solid #777; }
.pick button { width: 24px; height: 15px; border: 1px solid #666; padding-left: 1px; color: #bbb; }
.prop .lk2 { grid-column: 8; padding-left: 19px; color: #999; }
.val > span { grid-column: 4 / 9; padding-left: 43px; }
.red { background: #b94150; }
.ice { background: #cfdce5; }
.amber { background: #e3a24e; }

.tracks { flex: 1; min-width: 0; position: relative; padding-left: 6px; margin-top: 6px; background: #232323; }
.nav { height: 9px; background: #696969; margin-top: 1px; }
.nav, .work { border: solid #3583c9; border-width: 0 7px 0 0; border-radius: 0 5px 5px 0; position: relative; }
.nav::before, .work::before { content: ""; position: absolute; left: -6px; top: 0; bottom: 0; width: 5px; background: #3583c9; border-radius: 4px 0 0 4px; }
.ruler { position: relative; height: 20px; border-bottom: 1px solid #0e0e0e; overflow: hidden; margin-left: -6px; padding-left: 6px; }
.scale { position: relative; height: 20px; }
.scale span { position: absolute; top: 1px; transform: translateX(-50%); }
.scale i { position: absolute; bottom: 0; width: 1px; height: 8px; background: #666; }
.scale i:nth-of-type(even) { height: 4px; }
.work { height: 16px; background: #606060; }
.cache { height: 4px; position: relative; background: #1a1a1a; border-bottom: 1px solid #111; }
.cache i { position: absolute; top: 0; height: 3px; background: #2aa043; }
.lane { height: 17px; background: #333; border-bottom: 1px solid #202020; position: relative; margin-right: 1px; }
.clip { height: 16px; width: 99.400%; background: linear-gradient(#7486d4, #4c5cc8); }
.lane svg { position: absolute; top: 4px; margin-left: -4px; color: #b4b4b4; }
.lane svg.sel-key { color: #3583c9; }
.fill { border: 0; border-bottom: 1px solid #2a2020; margin-right: 1px; height: 17px; position: relative; overflow: hidden; }
.fill i { position: absolute; top: 0; bottom: 0; }
.playhead { position: absolute; top: 0; bottom: 0; left: 6px; right: 1px; pointer-events: none; }
.playhead i { position: absolute; left: 27.400%; top: 1px; bottom: 0; width: 2px; background: #3a7ab4; }
.playhead i::before { content: ""; position: absolute; left: -5px; top: 14px; width: 12px; height: 14px; background: #3583c9; clip-path: polygon(0 0, 100% 0, 100% 60%, 50% 100%, 0 60%); }
.gutter { width: 18px; padding: 36px 1px 0 2px; display: flex; flex-direction: column; gap: 4px; }
.gutter i { width: 13px; height: 72px; border-radius: 6px; background: #2f2f2f; }
footer { height: 16px; border-top: 1px solid #0e0e0e; display: flex; align-items: center; white-space: nowrap; flex: none; }
.fi { display: flex; gap: 5px; padding-left: 6px; width: 86px; }
.frt { width: 223px; }
.frt b { color: #4fb58c; font-weight: 600; }
.tsm { width: 164px; border: 1px solid #2b2b2b; border-width: 0 1px; }
.zoom { display: flex; align-items: center; gap: 12px; margin-left: 139px; }
.zoom input { width: 50px; height: 10px; }
.zoom input::-webkit-slider-runnable-track { height: 1px; background: #444; }
.zoom input::-webkit-slider-thumb { appearance: none; width: 9px; height: 9px; margin-top: -4px; border: 2px solid #aaa; border-radius: 50%; background: #232323; }
```
FILE: app.js
```js
const SPAN = 241.2;
const at = f => (f / SPAN * 100).toFixed(3) + '%';
const base = [6, 84, 162, 240];
const rows = [];
for (let n = 0; n < 8; n++) rows.push({ color: n % 2 ? 'ice' : 'red', holds: [], spans: [] });
rows[6].holds = [45, 51, 123, 129, 201, 207];
rows[6].spans = [[45.3, 51], [123, 129.6], [201.5, 207.3]];
rows[7].holds = [78, 156, 234];
rows[7].spans = [[78.4, 84], [156.1, 162.7], [234.6, 240.3]];

const icon = (id, w, h, extra = '') => `<svg width="${w}" height="${h}" ${extra}><use href="#i-${id}"/></svg>`;

document.getElementById('props').innerHTML = rows.map((r, n) => `
  <div class="row prop">
    <span class="av">${icon('prev', 8, 10)}${icon('diamond', 10, 10)}${icon('next', 8, 10)}</span>
    <span class="cn${n ? '' : ' hot'}">${icon('chev', 10, 10)}${icon('watch', 12, 14, 'class="w"')}${icon('graph', 12, 12)}<b>Color</b></span>
    <span class="pick"><i class="${r.color}"></i><button aria-label="Pick color">${icon('pick', 20, 10)}</button></span>
    <span class="lk2">${icon('spiral', 13, 13)}</span>
  </div>
  <div class="row val"><span>Value: Color</span></div>`).join('');

document.getElementById('lanes').innerHTML = rows.map((r, n) => `
  <div class="lane">${base.map(f => icon(f === 240 ? 'end' : 'key', 10, 10, `style="left:${at(f)}"${!n && f === 84 ? ' class="sel-key"' : ''}`)).join('')}${r.holds.map(f => icon('hold', 10, 10, `style="left:${at(f)}"`)).join('')}</div>
  <div class="fill ${r.color}">${r.spans.map(([a, b]) => `<i class="amber" style="left:${at(a)};width:${at(b - a)}"></i>`).join('')}</div>`).join('');

let marks = '';
for (let f = 0; f <= 240; f += 12) {
  const s = String(Math.floor(f / 24)).padStart(2, '0');
  marks += `<i style="left:${at(f)}"></i><span style="left:${at(f)}">${s}:${f % 24 ? '12' : '00'}f</span>`;
}
document.getElementById('ruler').innerHTML = `<div class="scale">${marks}</div>`;
document.getElementById('cache').innerHTML = [[62.8, 66.9], [140.8, 145], [218.8, 223]]
  .map(([a, b]) => `<i style="left:${at(a)};width:${at(b - a)}"></i>`).join('');
```
